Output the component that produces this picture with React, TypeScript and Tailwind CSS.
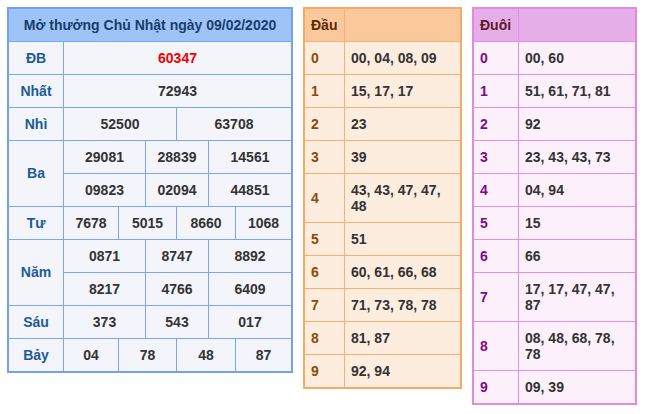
import React from "react";

const font = { fontFamily: '"Liberation Sans", Arial, sans-serif' };

type Cell = { text: string; span: string; red?: boolean };

// Cột lưới: nhãn | A | B | C | D | E | F
const rows: { label: string; rowSpan?: number; cells: Cell[][] }[] = [
  { label: "ĐB", cells: [[{ text: "60347", span: "col-span-6", red: true }]] },
  { label: "Nhất", cells: [[{ text: "72943", span: "col-span-6" }]] },
  {
    label: "Nhì",
    cells: [
      [
        { text: "52500", span: "col-span-3" },
        { text: "63708", span: "col-span-3" },
      ],
    ],
  },
  {
    label: "Ba",
    cells: [
      [
        { text: "29081", span: "col-span-2" },
        { text: "28839", span: "col-span-2" },
        { text: "14561", span: "col-span-2" },
      ],
      [
        { text: "09823", span: "col-span-2" },
        { text: "02094", span: "col-span-2" },
        { text: "44851", span: "col-span-2" },
      ],
    ],
  },
  {
    label: "Tư",
    cells: [
      [
        { text: "7678", span: "col-span-1" },
        { text: "5015", span: "col-span-2" },
        { text: "8660", span: "col-span-2" },
        { text: "1068", span: "col-span-1" },
      ],
    ],
  },
  {
    label: "Năm",
    cells: [
      [
        { text: "0871", span: "col-span-2" },
        { text: "8747", span: "col-span-2" },
        { text: "8892", span: "col-span-2" },
      ],
      [
        { text: "8217", span: "col-span-2" },
        { text: "4766", span: "col-span-2" },
        { text: "6409", span: "col-span-2" },
      ],
    ],
  },
  {
    label: "Sáu",
    cells: [
      [
        { text: "373", span: "col-span-2" },
        { text: "543", span: "col-span-2" },
        { text: "017", span: "col-span-2" },
      ],
    ],
  },
  {
    label: "Bảy",
    cells: [
      [
        { text: "04", span: "col-span-1" },
        { text: "78", span: "col-span-2" },
        { text: "48", span: "col-span-2" },
        { text: "87", span: "col-span-1" },
      ],
    ],
  },
];

const dau: [string, string][] = [
  ["0", "00, 04, 08, 09"],
  ["1", "15, 17, 17"],
  ["2", "23"],
  ["3", "39"],
  ["4", "43, 43, 47, 47, 48"],
  ["5", "51"],
  ["6", "60, 61, 66, 68"],
  ["7", "71, 73, 78, 78"],
  ["8", "81, 87"],
  ["9", "92, 94"],
];

const duoi: [string, string][] = [
  ["0", "00, 60"],
  ["1", "51, 61, 71, 81"],
  ["2", "92"],
  ["3", "23, 43, 43, 73"],
  ["4", "04, 94"],
  ["5", "15"],
  ["6", "66"],
  ["7", "17, 17, 47, 47, 87"],
  ["8", "08, 48, 68, 78, 78"],
  ["9", "09, 39"],
];

function ResultTable() {
  return (
    <div className="w-[286px] border-2 border-[#72a2ef] bg-[#7aa8ef]">
      <div className="grid grid-cols-[54px_54px_26px_30px_31px_26px_55px] auto-rows-[32px] gap-px">
        <div className="col-span-7 flex items-center justify-center bg-[#9fc3f7] text-[#163f6b]">
          Mở thưởng Chủ Nhật ngày 09/02/2020
        </div>
        {rows.map((r) => (
          <React.Fragment key={r.label}>
            <div
              className={`flex items-center justify-center bg-[#f3f5fa] text-[#1d5a98] ${
                r.cells.length === 2 ? "row-span-2" : ""
              }`}
            >
              {r.label}
            </div>
            {r.cells.map((line) =>
              line.map((c) => (
                <div
                  key={c.text}
                  className={`${c.span} flex items-center justify-center bg-[#f3f5fa] ${
                    c.red ? "text-[#f50000]" : "text-[#333333]"
                  }`}
                >
                  {c.text}
                </div>
              ))
            )}
          </React.Fragment>
        ))}
      </div>
    </div>
  );
}

function LotoTable({
  title,
  data,
  cols,
  wrap,
  head,
  cell,
  digit,
  headText,
}: {
  title: string;
  data: [string, string][];
  cols: string;
  wrap: string;
  head: string;
  cell: string;
  digit: string;
  headText: string;
}) {
  return (
    <div className={wrap}>
      <div className={`grid ${cols} gap-px leading-4`}>
        <div className={`${head} ${headText} px-[6px] py-2`}>{title}</div>
        <div className={head} />
        {data.map(([d, v]) => (
          <React.Fragment key={d}>
            <div className={`${cell} ${digit} flex items-center px-[6px] py-2`}>{d}</div>
            <div className={`${cell} text-[#333333] px-[6px] py-2`}>{v}</div>
          </React.Fragment>
        ))}
      </div>
    </div>
  );
}

export default function App() {
  return (
    <div className="flex items-start gap-[10px] bg-white p-[7px] text-[14px] font-bold" style={font}>
      <ResultTable />
      <LotoTable
        title="Đầu"
        data={dau}
        cols="grid-cols-[39px_115px]"
        wrap="w-[159px] border-2 border-[#f5aa66] bg-[#f6b072]"
        head="bg-[#f9c99b]"
        cell="bg-[#fdeddf]"
        digit="text-[#8a4b0c]"
        headText="text-[#5b2a07]"
      />
      <LotoTable
        title="Đuôi"
        data={duoi}
        cols="grid-cols-[44px_116px]"
        wrap="w-[165px] border-2 border-[#e08ae0] bg-[#e38fe3]"
        head="bg-[#e6aee9]"
        cell="bg-[#fcf0fb]"
        digit="text-[#7d0a86]"
        headText="text-[#5e1a2a]"
      />
    </div>
  );
}
